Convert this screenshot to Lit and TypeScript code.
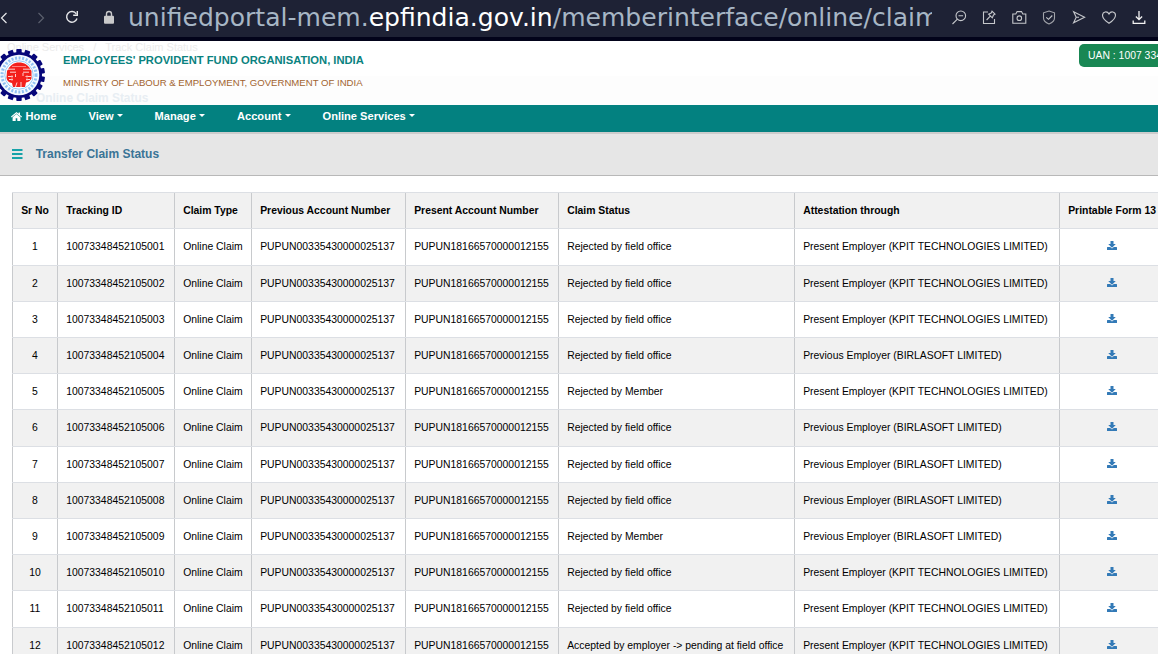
import { LitElement, html, css, svg } from "lit";
import { customElement } from "lit/decorators.js";

const PRESENT = "Present Employer (KPIT TECHNOLOGIES LIMITED)";
const PREVIOUS = "Previous Employer (BIRLASOFT LIMITED)";
const OFFICE = "Rejected by field office";
const MEMBER = "Rejected by Member";

const claims: [string, string][] = [
  [OFFICE, PRESENT], [OFFICE, PRESENT], [OFFICE, PRESENT], [OFFICE, PREVIOUS],
  [MEMBER, PRESENT], [OFFICE, PREVIOUS], [OFFICE, PREVIOUS], [OFFICE, PREVIOUS],
  [MEMBER, PREVIOUS], [OFFICE, PRESENT], [OFFICE, PRESENT],
  ["Accepted by employer -> pending at field office", PRESENT],
];

const headings = ["Sr No", "Tracking ID", "Claim Type", "Previous Account Number",
  "Present Account Number", "Claim Status", "Attestation through", "Printable Form 13"];

const toolIcons = [
  svg`<circle cx="8.800" cy="5.800" r="4.800"/><path d="M5.400 9.200 .5 14M6.500 5.800h4.600"/>`,
  svg`<path d="M6 2H1.500v11.500h11V9"/><path d="M10 1.200 13 4.200 11.500 5 10.300 7.800 6.600 4.200 9.200 3zM8.300 6.200 4.600 10"/>`,
  svg`<path d="M.8 4h3l1.300-2.400h4.400L10.800 4h3v9.200H.8z"/><circle cx="7.300" cy="8.200" r="2.300"/>`,
  svg`<path stroke="#a2a4aa" d="M7 1 12.500 2.800V8c0 3-2.500 4.800-5.500 6C4 12.800 1.500 11 1.500 8V2.800z"/><path d="M4.300 7.300l2.200 2L10.300 5.500"/>`,
  svg`<path d="M1.600 1.800 12.600 7.300 1.600 12.800l2.600-5.500zM4.200 7.300H7"/>`,
  svg`<path d="M7 13.300C3.500 11 .5 8.500 .5 5.200 .5 1.500 5.300.6 7 4 8.700.6 13.500 1.500 13.500 5.200c0 3.300-3 5.800-6.500 8.100z"/>`,
  svg`<path stroke="#f3f3f3" stroke-width="1.300" d="M7 1v8.300M3.900 6.500 7 9.600l3.100-3.100M1.200 10.500v2.800h11.600v-2.800"/>`,
];

const teeth = Array.from({ length: 18 }, (_, i) => i * 20);

const emblem = svg`
  ${teeth.map((a) => svg`<rect x="-2.700" y="-26" width="5.400" height="5.500" rx=".8" fill="#07077a" transform="rotate(${a})"/>`)}
  <circle r="23" fill="#07077a"/>
  <circle r="20.300" fill="#f4faff"/>
  <circle r="17" fill="none" stroke="#67a9ee" stroke-width="3" stroke-dasharray="2 1.600" opacity=".7"/>
  <circle r="14.200" fill="#fff" stroke="#8dc4f5" stroke-width=".9"/>
  <path fill="#f3201c" d="M-12-4C-9-10-5-12.500 0-12.500S10-10 12.500-4V3.500C11 6 10 7 7 7.500L6 12-6 12-7 8C-10 7.500-12 6-12.500 3z"/>
  <path fill="none" stroke="#fff" stroke-width=".8" d="M-12-5.800H-4M4-5.800H12M-9-2.800h6M4-2.800h6M-11 1.500h5M6.500 1.500H12M-10 4.500h4M7 4.500h4M-3.500-1v3M4-2v3M-2 7.500l-1.500 4.500M2 7v5"/>
  <path fill="none" stroke="#ff9b97" stroke-width=".8" d="M-7-8.500H7M-7 0v6M8 0v6"/>`;

const download = html`<svg class="dl" viewBox="0 0 10 10"><path fill="#337ab7" d="M3.500 0h3v3h2.300L5 6.700 1.200 3h2.300z"/><path fill="#337ab7" d="M.4 6h2.800L5 7.500 6.800 6h2.800q.4 0 .4.400v2.300q0 .4-.4.400H.4Q0 9.100 0 8.700V6.400Q0 6 .4 6z"/></svg>`;

@customElement("app-root")
export class AppRoot extends LitElement {
  static styles = css`
    :host { display: block; width: 1158px; height: 654px; overflow: hidden; background: #fff;
      font-family: "Liberation Sans", Arial, sans-serif; color: #000; }
    * { box-sizing: border-box; }
    svg { display: block; flex: none; }
    .browser { display: flex; align-items: center; height: 41px; background: #1e2235;
      border-bottom: 4px solid #02031a; padding-bottom: 2px; overflow: hidden; }
    .back { width: 8px; height: 14px; }
    .fwd { width: 8px; height: 14px; margin-left: 29px; }
    .reload { width: 14px; height: 14px; margin-left: 20px; margin-top: -2px; }
    .lock { width: 12px; height: 14px; margin-left: 24px; margin-top: -2px; }
    .url { width: 804px; margin-left: 13px; overflow: hidden; white-space: nowrap; line-height: 34px;
      font-family: "DejaVu Sans", sans-serif; font-size: 25.050px; color: #a7b6c5; }
    .host { color: #fff; }
    .tools { display: flex; gap: 15px; margin-left: 20px; }
    .tool { width: 15px; height: 15px; fill: none; stroke: #c5c7cb; stroke-width: 1.100; }
    .mast { position: relative; display: flex; height: 64px; overflow: hidden;
      background: linear-gradient(#fff 35px, #fdfdfd 35px); }
    .ghost { position: absolute; white-space: pre; }
    .crumbs { left: 7px; top: 0; font-size: 11px; line-height: 13px; color: #ececec; }
    .title { left: 36px; top: 50px; font-size: 11.900px; line-height: 14px; font-weight: bold; color: #e8eef3; }
    .logo { width: 54px; height: 54px; margin: 7px 0 0 -8px; position: relative; }
    .org { position: relative; padding: 13px 0 0 17px; white-space: nowrap; }
    .name { font-size: 11.200px; line-height: 13px; font-weight: bold; color: #0a8280; }
    .ministry { margin-top: 10px; font-size: 9.600px; line-height: 12px; color: #a2642f; }
    .uan { margin: 3px 0 0 auto; width: 79px; height: 23px; padding-left: 9px; flex: none; overflow: hidden;
      border-radius: 5px 0 0 5px; background: #198754; color: #fff; font-size: 10.400px; line-height: 23px; white-space: nowrap; }
    .nav { display: flex; height: 27px; padding-left: 11px; background: #038180; color: #fff;
      font-size: 11.100px; font-weight: bold; line-height: 22px; white-space: nowrap; }
    .item { display: flex; }
    .home { width: 77.500px; }
    .view { width: 66px; }
    .manage { width: 82.500px; }
    .account { width: 85.500px; }
    .house { width: 11px; height: 9px; margin: 7px 3.500px 0 0; }
    .caret { margin: 9px 0 0 3.500px; width: 0; height: 0; border: 3px solid transparent; border-top-color: #fff; border-bottom: 0; }
    .heading { display: flex; align-items: center; height: 44px; padding: 0 0 2px 12px; background: #e6e6e6;
      border-top: 2px solid #ccc; border-bottom: 1px solid #b8b8b8; color: #3a7496;
      font-size: 12px; font-weight: bold; }
    .burger { width: 11px; height: 10px; margin-right: 12.700px; }
    .grid { margin: 16.220px 0 0 12px; width: 1160px; font-size: 10.400px; }
    .row { display: grid; grid-template-columns: 45px 117px 77px 154px 153px 236px 265px 113px; height: 36.210px;
      border-top: 1px solid #dcdfe4; }
    .row:nth-child(odd) { background: #f1f1f1; }
    .head { font-weight: bold; }
    .cell { border-left: 1px solid #c8cacd; padding-left: 8.200px; line-height: 35.500px; white-space: nowrap; overflow: hidden; }
    .cell:first-child { text-align: center; padding-left: 0; }
    .dl { width: 10px; height: 10px; margin: 12px 0 0 39px; }
  `;

  render() {
    const menu = (cls: string, label: string) =>
      html`<div class="item ${cls}"><span>${label}</span><i class="caret"></i></div>`;
    return html`
      <div class="browser">
        <svg class="back" viewBox="0 0 8 14" fill="none" stroke="#e6e7ea" stroke-width="1.200"><path d="M6.500 2 1.500 7l5 5"/></svg>
        <svg class="fwd" viewBox="0 0 8 14" fill="none" stroke="#5c606e" stroke-width="1.200"><path d="m1.500 2 5 5-5 5"/></svg>
        <svg class="reload" viewBox="0 0 14 14" fill="none" stroke="#e6e7ea" stroke-width="1.400"><path d="M12 8.500A5.300 5.300 0 1 1 11.300 3.800"/><path d="M12.300 1v4.200H8.200" /></svg>
        <svg class="lock" viewBox="0 0 12 14"><path d="M3.500 6V4a2.500 2.500 0 0 1 5 0v2" fill="none" stroke="#c9c9ca" stroke-width="1.400"/><rect x="1" y="5.700" width="10" height="8" rx="1" fill="#c9c9ca"/></svg>
        <div class="url">unifiedportal-mem.<span class="host">epfindia.gov.in</span>/memberinterface/online/claim</div>
        <div class="tools">${toolIcons.map((i) => html`<svg class="tool" viewBox="0 0 15 15">${i}</svg>`)}</div>
      </div>
      <div class="mast">
        <div class="ghost crumbs">Online Services   /   Track Claim Status</div>
        <div class="ghost title">Online Claim Status</div>
        <svg class="logo" viewBox="-27 -27 54 54">${emblem}</svg>
        <div class="org">
          <div class="name">EMPLOYEES' PROVIDENT FUND ORGANISATION, INDIA</div>
          <div class="ministry">MINISTRY OF LABOUR &amp; EMPLOYMENT, GOVERNMENT OF INDIA</div>
        </div>
        <div class="uan">UAN : 1007 334</div>
      </div>
      <div class="nav">
        <div class="item home"><svg class="house" viewBox="0 0 11 9"><path fill="#fff" d="M5.500 0 7.600 1.700V.6H9v2.300l2 1.700-.6.900L5.500 1.500.6 5.500 0 4.600zM5.500 2l3.900 3.200V9H6.300V6.200H4.700V9H1.600V5.200z"/></svg><span>Home</span></div>
        ${menu("view", "View")}${menu("manage", "Manage")}${menu("account", "Account")}${menu("online", "Online Services")}
      </div>
      <div class="heading">
        <svg class="burger" viewBox="0 0 11 10"><path fill="#17a2a8" d="M0 0h10.500v2H0zM0 4h10.500v2H0zM0 8h10.500v2H0z"/></svg>
        <span>Transfer Claim Status</span>
      </div>
      <div class="grid">
        <div class="row head">${headings.map((h) => html`<div class="cell">${h}</div>`)}</div>
        ${claims.map(([status, via], i) => html`<div class="row">
          <div class="cell">${i + 1}</div>
          <div class="cell">${10073348452105 + String(i + 1).padStart(3, "0")}</div>
          <div class="cell">Online Claim</div>
          <div class="cell">PUPUN00335430000025137</div>
          <div class="cell">PUPUN18166570000012155</div>
          <div class="cell">${status}</div>
          <div class="cell">${via}</div>
          <div class="cell">${download}</div>
        </div>`)}
      </div>`;
  }
}
